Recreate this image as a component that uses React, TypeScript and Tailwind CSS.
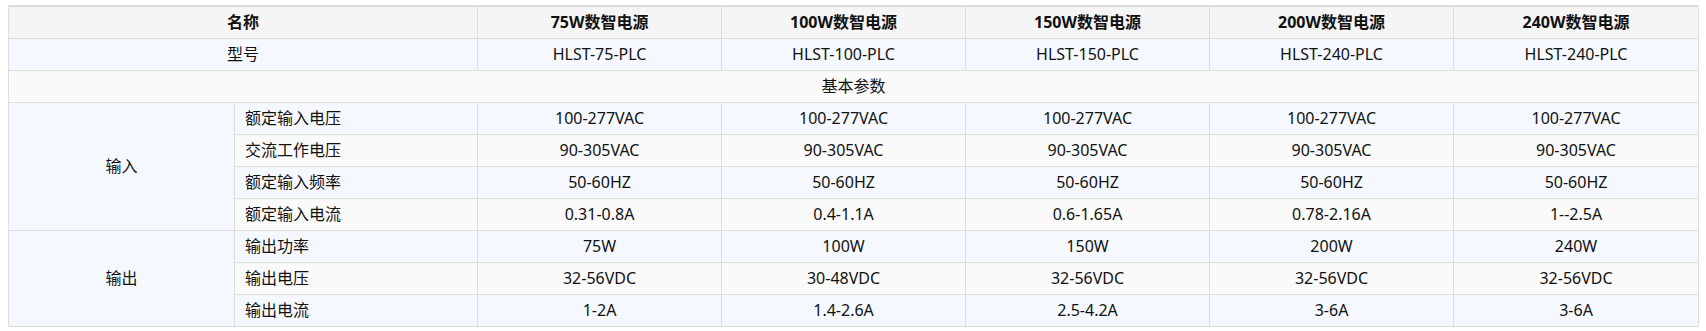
const models = [
  { name: "75W数智电源", model: "HLST-75-PLC" },
  { name: "100W数智电源", model: "HLST-100-PLC" },
  { name: "150W数智电源", model: "HLST-150-PLC" },
  { name: "200W数智电源", model: "HLST-240-PLC" },
  { name: "240W数智电源", model: "HLST-240-PLC" },
];

const inputRows = [
  { label: "额定输入电压", values: ["100-277VAC", "100-277VAC", "100-277VAC", "100-277VAC", "100-277VAC"] },
  { label: "交流工作电压", values: ["90-305VAC", "90-305VAC", "90-305VAC", "90-305VAC", "90-305VAC"] },
  { label: "额定输入频率", values: ["50-60HZ", "50-60HZ", "50-60HZ", "50-60HZ", "50-60HZ"] },
  { label: "额定输入电流", values: ["0.31-0.8A", "0.4-1.1A", "0.6-1.65A", "0.78-2.16A", "1--2.5A"] },
];

const outputRows = [
  { label: "输出功率", values: ["75W", "100W", "150W", "200W", "240W"] },
  { label: "输出电压", values: ["32-56VDC", "30-48VDC", "32-56VDC", "32-56VDC", "32-56VDC"] },
  { label: "输出电流", values: ["1-2A", "1.4-2.6A", "2.5-4.2A", "3-6A", "3-6A"] },
];

const cell = "border border-[#dddddd] text-center align-middle p-0";
const blue = "bg-[#f5f9ff]";
const grey = "bg-[#fafafa]";

const Group = ({ title, rows }: { title: string; rows: typeof inputRows }) => (
  <>
    {rows.map((r, i) => (
      <tr key={r.label} className={`h-8 ${i % 2 === 0 ? blue : grey}`}>
        {i === 0 && (
          <td rowSpan={rows.length} className={`${cell} ${blue}`}>
            {title}
          </td>
        )}
        <td className="border border-[#dddddd] text-left pl-[10px] align-middle">{r.label}</td>
        {r.values.map((v, j) => (
          <td key={j} className={cell}>
            {v}
          </td>
        ))}
      </tr>
    ))}
  </>
);

const App = () => {
  return (
    <div className="w-[1706px] h-[331px] bg-white pt-[5px] px-2 font-['Noto_Sans','Noto_Sans_CJK_SC',sans-serif] text-[16px] leading-none text-[#111]">
      <table className="w-[1690px] table-fixed border-collapse border-t-2 border-t-[#dddddd]">
        <colgroup>
          <col className="w-[226px]" />
          <col className="w-[243px]" />
          <col className="w-[244px]" />
          <col className="w-[244px]" />
          <col className="w-[244px]" />
          <col className="w-[244px]" />
          <col className="w-[245px]" />
        </colgroup>
        <tbody>
          <tr className="h-8 bg-[#f5f5f5] font-bold">
            <td colSpan={2} className={cell}>
              名称
            </td>
            {models.map((m) => (
              <td key={m.name} className={cell}>
                {m.name}
              </td>
            ))}
          </tr>
          <tr className={`h-8 ${blue}`}>
            <td colSpan={2} className={cell}>
              型号
            </td>
            {models.map((m, j) => (
              <td key={j} className={cell}>
                {m.model}
              </td>
            ))}
          </tr>
          <tr className={`h-8 ${grey}`}>
            <td colSpan={7} className={cell}>
              基本参数
            </td>
          </tr>
          <Group title="输入" rows={inputRows} />
          <Group title="输出" rows={outputRows} />
        </tbody>
      </table>
    </div>
  );
};

export default App;
